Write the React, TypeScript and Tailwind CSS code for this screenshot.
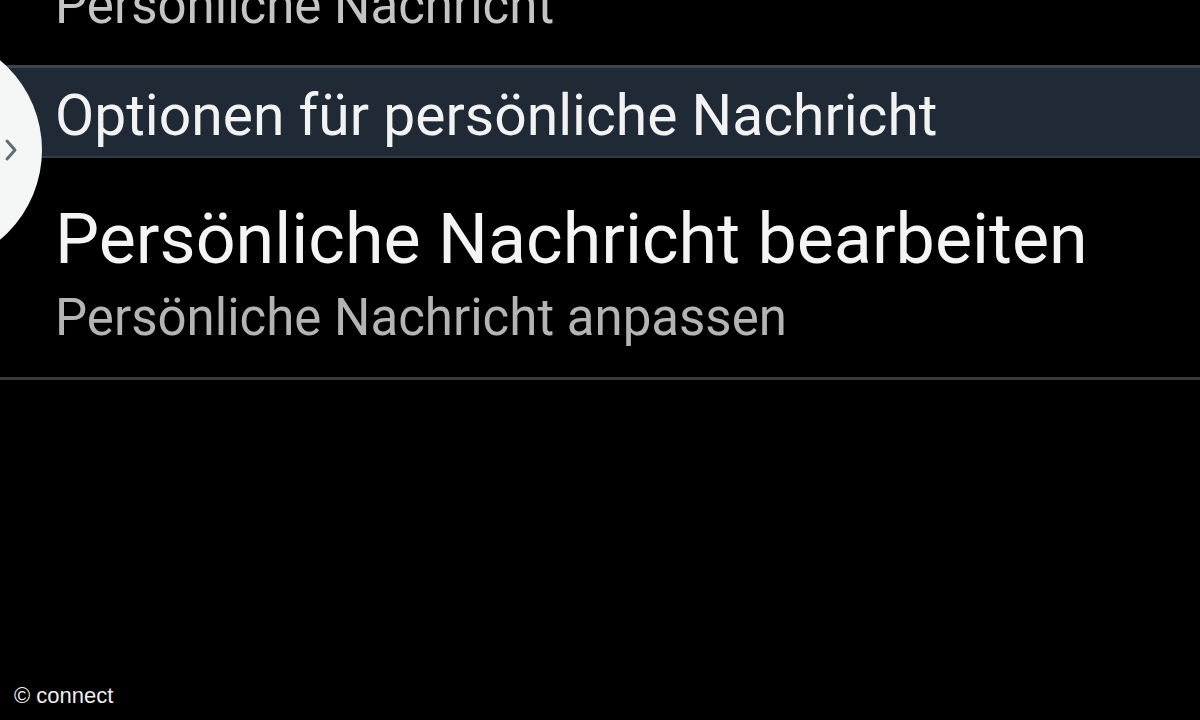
export default function App() {
  return (
    <div
      className="relative h-[720px] w-[1200px] overflow-hidden bg-black"
      style={{ fontFamily: "Roboto, 'Noto Sans', sans-serif" }}
    >
      {/* previous item, cut off by the top edge */}
      <div className="flex h-[65px] flex-col pl-[55px]">
        <p className="mt-[-20px] text-[51px] leading-[51px] text-[#c4c4c4]">Persönliche Nachricht</p>
      </div>

      {/* section header */}
      <div className="flex h-[93px] items-center border-t-[3px] border-b-[2px] border-t-[#3c4550] border-b-[#333c45] bg-[#1f2a36] pl-[55px]">
        <p className="pt-[6px] text-[57px] leading-none text-[#f2f2f2]">Optionen für persönliche Nachricht</p>
      </div>

      {/* list item */}
      <div className="flex h-[219px] flex-col pl-[55px] pt-[46px]">
        <p className="text-[70px] leading-[70px] text-[#f4f4f4]">Persönliche Nachricht bearbeiten</p>
        <p className="mt-[18px] text-[51px] leading-[51px] text-[#b4b4b4]">Persönliche Nachricht anpassen</p>
      </div>
      <div className="h-[3px] bg-[#3a3a3a]" />

      {/* drawer handle */}
      <div className="absolute left-[-192px] top-[33px] flex h-[234px] w-[234px] items-center justify-end rounded-full bg-[#f4f6f5] pr-[24px]">
        <svg width="14" height="24" viewBox="0 0 14 24" fill="none">
          <path d="M3 3l8 9-8 9" stroke="#5f6d78" strokeWidth="3" strokeLinecap="round" strokeLinejoin="round" />
        </svg>
      </div>

      <p
        className="absolute bottom-[8px] left-[14px] text-[22px] text-[#eeeeee]"
        style={{ fontFamily: "'Liberation Sans', Arial, sans-serif" }}
      >
        © connect
      </p>
    </div>
  );
}
